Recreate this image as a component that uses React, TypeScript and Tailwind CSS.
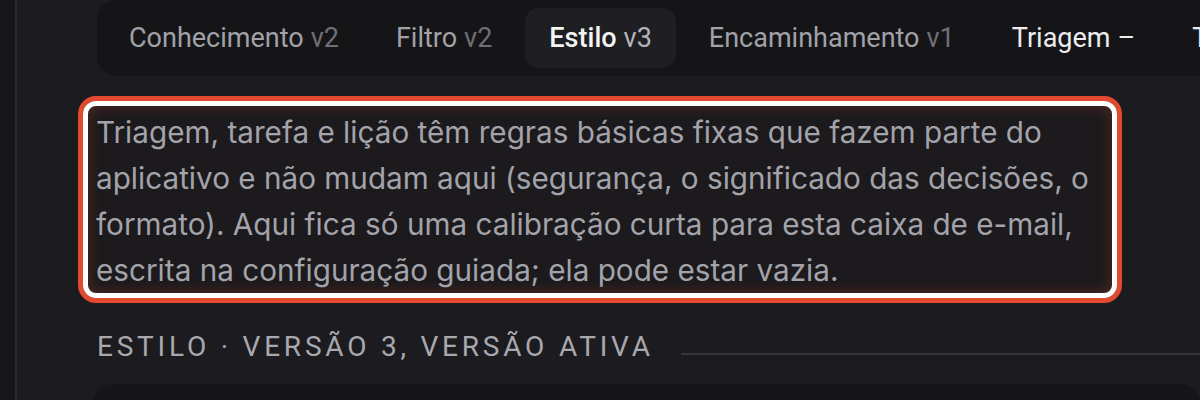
const tabs = [
  { name: 'Conhecimento', ver: 'v2' },
  { name: 'Filtro', ver: 'v2' },
  { name: 'Estilo', ver: 'v3', active: true },
  { name: 'Encaminhamento', ver: 'v1' },
  { name: 'Triagem', ver: '–', bright: true },
  { name: 'Tarefa', ver: '–', bright: true },
]

export default function App() {
  return (
    <div className="flex h-[400px] w-[1200px] overflow-hidden bg-[#1c1c20]">
      {/* sidebar edge */}
      <div className="w-[17px] shrink-0 border-r-2 border-[#2a2a2f] bg-[#17171a]" />

      <main className="min-w-0 flex-1 pl-[80px]">
        {/* Prompt tabs */}
        <div className="flex w-max gap-[9px] rounded-[20px] bg-[#151518] p-2 font-['Roboto',sans-serif] text-[27px]">
          {tabs.map((t) => (
            <div
              key={t.name}
              className={
                t.active
                  ? 'flex h-[60px] items-center gap-[7px] rounded-[14px] bg-[#1f1f23] px-6 font-medium text-[#f4f4f5]'
                  : 'flex h-[60px] items-center gap-[7px] rounded-[14px] px-6'
              }
            >
              <span className={t.active ? '' : t.bright ? 'text-[#ececee]' : 'text-[#a1a1a8]'}>{t.name}</span>
              <span className={t.active ? 'font-normal text-[#b4b4ba]' : t.bright ? 'text-[#ececee]' : 'text-[#6f6f76]'}>
                {t.ver}
              </span>
            </div>
          ))}
        </div>

        {/* Highlighted note */}
        <div className="-ml-[19px] mt-5 w-[1044px] rounded-[18px] border-[5px] border-[#e2492e]">
          <div className="rounded-[13px] border-[5px] border-white bg-[#1c1a1d] shadow-[inset_0_0_14px_rgba(200,72,44,0.35)]">
            <p className="px-2 pb-0 pt-[3px] font-['Inter',sans-serif] text-[29.7px] leading-[46px] text-[#a3a3ab]">
              Triagem, tarefa e lição têm regras básicas fixas que fazem parte do aplicativo e não mudam aqui
              (segurança, o significado das decisões, o formato). Aqui fica só uma calibração curta para esta caixa de
              e-mail, escrita na configuração guiada; ela pode estar vazia.
            </p>
          </div>
        </div>

        {/* Section heading */}
        <div className="mt-[26px] flex items-center gap-[27px]">
          <h2 className="shrink-0 font-['Roboto',sans-serif] text-[28px] uppercase leading-[36px] tracking-[0.135em] text-[#a8a8ae]">
            Estilo · versão 3, versão ativa
          </h2>
          <div className="mt-[14px] h-[2px] flex-1 bg-[#35353b]" />
        </div>

        <div className="-ml-1 mt-[19px] h-[80px] rounded-[20px] bg-[#161619]" />
      </main>
    </div>
  )
}
